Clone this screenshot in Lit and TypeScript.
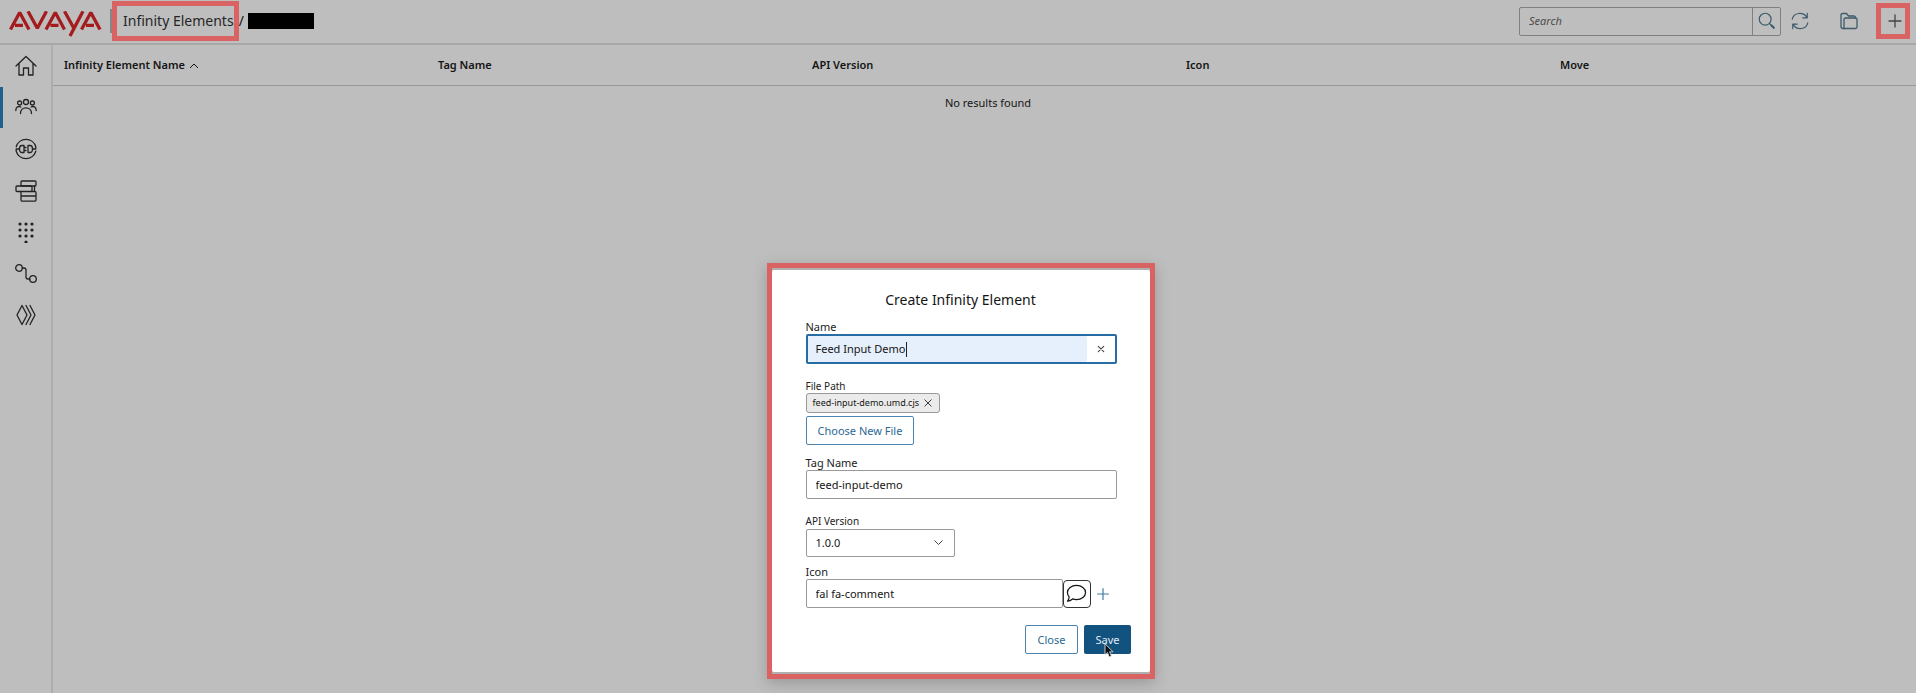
import { LitElement, html, css, svg } from "lit";
import { customElement, state } from "lit/decorators.js";
import { classMap } from "lit/directives/class-map.js";

const icons = {
  home: svg`<path d="M1 11 11 1.500 21 11M4 8.500V20h4.500v-7h5v7H18V8.500"/>`,
  users: svg`<circle cx="11" cy="6" r="2.500"/><circle cx="4.600" cy="7" r="2"/><circle cx="17.400" cy="7" r="2"/><path d="M5.500 17.500c0-7.500 11-7.500 11 0M.8 14.500c0-3.200 2.200-4.800 5-3.500M21.200 14.500c0-3.200-2.200-4.800-5-3.500"/>`,
  plug: svg`<path d="M1.200 8.800A10.200 10.200 0 0 1 20.800 8.800M20.800 13.200A10.200 10.200 0 0 1 1.200 13.200M1.200 13.200V11H4.500M20.800 8.800V11H17.500"/><path d="M9 7.500H7Q4.500 7.500 4.500 11T7 14.500h2zM9 9.500h2M9 12.500h2M13 7.500h2q2.500 0 2.500 3.500T15 14.500h-2z"/>`,
  stack: svg`<rect x="6" y="1" width="15" height="5" rx="1"/><rect x="1" y="6" width="16" height="5.500" rx="1"/><path d="M19.500 6v5.500M6 11.500V20q0 1.200 1.200 1.200h12.600q1.200 0 1.200-1.200v-7.300q0-1.200-1.200-1.200H16M6 16h15"/>`,
  keypad: svg`<g fill="currentColor" stroke="none">${[5, 11, 17].map((x) => [3, 9, 15].map((y) => svg`<circle cx=${x} cy=${y} r="1.600"/>`))}<circle cx="11" cy="21" r="1.600"/></g>`,
  route: svg`<circle cx="4" cy="5" r="3.300"/><circle cx="18" cy="16" r="3.300"/><path d="M7.300 5H9q2 0 2 2v7q0 2 2 2h1.700"/>`,
  layers: svg`<path d="M7 1.500 12 11 7 20.500 2 11zM11 1.500 16 11l-5 9.500M15 1.500 20 11l-5 9.500"/>`,
  search: svg`<circle cx="9" cy="9" r="6.500"/><path d="m14 14 2 2"/><path stroke-width="2.400" d="m16 16 2.500 2.500"/>`,
  refresh: svg`<path d="M2.500 9C4 1.500 14.500.5 18.500 7M19 2.500v5h-5M19.500 13C18 20.500 7.500 21.500 3.500 15M3 19.500v-5h5"/>`,
  folder: svg`<path d="M6.500 18.500H5Q3 18.500 3 16.500V5q0-1.500 1.500-1.500h4L10.500 6H16q1.500 0 1.500 2"/><path d="M6 18.500V9.500Q6 8 7.500 8h10Q19 8 19 9.500V17q0 1.500-1.500 1.500z"/>`,
  plus: svg`<path d="M11 5v12M5 11h12"/>`,
  close: svg`<path d="m6 6 10 10M16 6 6 16"/>`,
  clear: svg`<path stroke-width="2.400" d="m5 5 12 12M17 5 5 17"/>`,
  comment: svg`<path d="M11 2.500c5.300 0 9.500 3.400 9.500 7.500s-4.200 7.500-9.500 7.500c-1.500 0-2.900-.3-4.100-.8C5.500 18 3.600 19 1.500 19c1.200-1.100 1.700-2.800 1.800-4.400C2.200 13.300 1.500 11.700 1.500 10c0-4.100 4.200-7.500 9.500-7.500z"/>`,
};

const navItems: Array<[string, unknown]> = [
  ["Home", icons.home],
  ["Users", icons.users],
  ["Connections", icons.plug],
  ["Queues", icons.stack],
  ["Keypad", icons.keypad],
  ["Workflows", icons.route],
  ["Elements", icons.layers],
];

const icon = (shape: unknown, size = 22) =>
  html`<svg width=${size} height=${size} viewBox="0 0 22 22" fill="none" stroke="currentColor" stroke-width="1.3" stroke-linejoin="round" stroke-linecap="round" aria-hidden="true">${shape}</svg>`;

@customElement("app-root")
export class AppRoot extends LitElement {
  @state() private active = 1;

  static styles = css`
    :host {
      display: flex;
      flex-direction: column;
      min-height: 100vh;
      position: relative;
      overflow: hidden;
      background: #bebebe;
      color: #151515;
      font: 11px/16px "Noto Sans", sans-serif;
    }
    * { box-sizing: border-box; }
    svg { display: block; flex: none; }
    button, input, select { font: inherit; color: inherit; margin: 0; padding: 0; border: 0; background: none; border-radius: 2px; outline: 0; }
    button { display: flex; align-items: center; justify-content: center; cursor: pointer; }
    header { display: flex; align-items: center; height: 45px; padding: 0 6px 1px 9px; border-bottom: 2px solid #a8a8a8; }
    .logo { margin-top: 6px; }
    .divider { width: 2px; height: 24px; margin-left: 8px; background: #858585; }
    .crumb { display: flex; align-items: center; height: 40px; padding: 0 0 0 6px; border: 5px solid #d96363; font-size: 14px; line-height: 20px; color: #262626; text-decoration: none; }
    .slash { padding: 0 4px 0 0; font-size: 14px; }
    .redacted { width: 66px; height: 16px; background: #000; }
    .search { display: flex; width: 262px; height: 29px; margin-left: auto; border: 1px solid #808080; border-radius: 2px; }
    .search input { flex: 1; min-width: 0; padding: 0 9px; font-style: italic; }
    .search input::placeholder { color: #4b4b4b; opacity: 1; }
    .search button { width: 28px; border-left: 1px solid #808080; border-radius: 0; }
    .tools, .search button { color: #3d5b6b; }
    .tools { display: flex; align-items: center; }
    .tool { width: 38px; height: 30px; }
    .folder { margin: 0 8px 0 11px; }
    .add { width: 34px; height: 36px; padding-left: 3px; border: 5px solid #d96363; border-radius: 0; color: #444; }
    .body { display: flex; flex: 1; }
    nav { width: 53px; border-right: 2px solid #adadad; }
    .items { display: flex; flex-direction: column; height: 291px; }
    .item { flex: 1; display: flex; align-items: center; justify-content: center; border-left: 3px solid transparent; border-radius: 0; color: #222; padding-right: 3px; }
    .item.active { border-color: #1f628f; }
    main { flex: 1; min-width: 0; overflow: hidden; }
    table { width: calc(100% + 7px); table-layout: fixed; border-collapse: collapse; }
    th { height: 40px; padding: 0 11px; text-align: left; font-weight: 600; border-bottom: 1px solid #999; }
    th svg { display: inline-block; margin-left: 4px; }
    td { height: 35px; padding: 0; text-align: center; }
    .overlay { position: absolute; inset: 0; display: flex; justify-content: center; align-items: flex-end; padding: 0 0 14px 5px; pointer-events: none; }
    .frame { width: 388px; padding: 2px 0; border: 5px solid #d96363; background: #b0b0b0; box-shadow: 0 4px 14px rgba(0, 0, 0, 0.2); pointer-events: auto; }
    form { display: flex; flex-direction: column; align-items: flex-start; padding: 18px 19px 18px 34px; background: #fff; border-radius: 2px; }
    h2 { align-self: stretch; margin: 0 15px 8px 0; text-align: center; font-size: 14px; line-height: 24px; font-weight: 400; }
    label, .label { line-height: 14px; color: #222; }
    .small { font-size: 10px; }
    .control { display: flex; width: 311px; height: 29px; border: 1px solid #999; border-radius: 2px; }
    .control input { flex: 1; min-width: 0; padding: 0 9px; }
    .focused { position: relative; height: 30px; border: 2px solid #276ca3; margin-bottom: 15px; }
    .focused input { background: #e6effc; padding-left: 8px; caret-color: transparent; }
    .focused button { width: 28px; color: #444; }
    .caret { position: absolute; left: 98px; top: 6px; width: 1px; height: 15px; background: #222; }
    .chip { display: flex; align-items: center; height: 20px; margin-bottom: 3px; padding: 0 4px 0 6px; gap: 2px; font-size: 9px; background: #ebebeb; border: 1px solid #999; border-radius: 3px; }
    .outline { height: 29px; padding: 0 12px; border: 1px solid #4d83ad; color: #2b6893; background: #fff; }
    .choose { margin-bottom: 11px; padding: 0 11px; }
    .tag { margin-bottom: 15px; }
    .select { position: relative; width: 149px; height: 28px; margin: 1px 0 8px; }
    select { width: 100%; height: 100%; padding: 0 9px; border: 1px solid #999; appearance: none; }
    .select svg { position: absolute; right: 12px; top: 10px; pointer-events: none; }
    .row { display: flex; align-items: center; }
    .row .control { width: 257px; }
    .preview { width: 28px; height: 28px; border: 1px solid #333; border-radius: 4px; }
    .more { width: 24px; height: 28px; color: #3f7ba3; }
    .actions { display: flex; gap: 6px; align-self: flex-end; margin-top: 17px; }
    .save { position: relative; height: 29px; padding: 0 11px; background: #12527f; color: #e4edf4; }
    .pointer { position: absolute; left: 20px; top: 18px; }
  `;

  render() {
    return html`
      <header>
        <svg class="logo" width="93" height="27" viewBox="0 0 93 27" fill="none" stroke="#a51c1f" stroke-width="3.300" stroke-linejoin="bevel" role="img" aria-label="Avaya">
          <path d="M1.500 18.500 10.700 1.500 20 18.500M6 14.300h8M19 .3l9.300 17L37.500.3M37 18.500l9.300-17 9.200 17M41.500 14.300h8M55.500.3l9.500 17.200M74 .3 61 25M72.500 18.500l9.300-17 9.200 17M77 14.300h8"/>
        </svg>
        <div class="divider"></div>
        <a class="crumb" href="#elements">Infinity Elements</a>
        <span class="slash">/</span>
        <span class="redacted"></span>
        <div class="search">
          <input type="search" placeholder="Search" aria-label="Search" />
          <button aria-label="Search">${icon(icons.search, 20)}</button>
        </div>
        <div class="tools">
          <button class="tool" aria-label="Refresh">${icon(icons.refresh, 20)}</button>
          <button class="tool folder" aria-label="Folders">${icon(icons.folder)}</button>
          <button class="add" aria-label="Add">${icon(icons.plus)}</button>
        </div>
      </header>
      <div class="body">
        <nav>
          <div class="items">
            ${navItems.map(
              ([name, shape], i) => html`<button
                class=${classMap({ item: true, active: i === this.active })}
                aria-label=${name}
                @click=${() => (this.active = i)}
              >${icon(shape)}</button>`
            )}
          </div>
        </nav>
        <main>
          <table>
            <thead>
              <tr>
                <th>Infinity Element Name<svg width="10" height="6" viewBox="0 0 10 6" fill="none" stroke="currentColor"><path d="m1 5 4-4 4 4"/></svg></th>
                <th>Tag Name</th>
                <th>API Version</th>
                <th>Icon</th>
                <th>Move</th>
              </tr>
            </thead>
            <tbody><tr><td colspan="5">No results found</td></tr></tbody>
          </table>
        </main>
      </div>
      <div class="overlay">
        <div class="frame" role="dialog" aria-labelledby="title">
          <form @submit=${(e: Event) => e.preventDefault()}>
            <h2 id="title">Create Infinity Element</h2>
            <label for="name">Name</label>
            <div class="control focused">
              <input id="name" .value=${"Feed Input Demo"} />
              <span class="caret"></span>
              <button type="button" aria-label="Clear">${icon(icons.clear, 10)}</button>
            </div>
            <span class="label small">File Path</span>
            <div class="chip">feed-input-demo.umd.cjs<button type="button" aria-label="Remove file">${icon(icons.close, 14)}</button></div>
            <button type="button" class="outline choose">Choose New File</button>
            <label for="tag">Tag Name</label>
            <div class="control tag"><input id="tag" .value=${"feed-input-demo"} /></div>
            <label class="small" for="version">API Version</label>
            <div class="select">
              <select id="version"><option>1.0.0</option></select>
              <svg width="9" height="7" viewBox="0 0 9 7" fill="none" stroke="#444"><path d="m.5 1.500 4 4 4-4"/></svg>
            </div>
            <label for="icon">Icon</label>
            <div class="row">
              <div class="control"><input id="icon" .value=${"fal fa-comment"} /></div>
              <button type="button" class="preview" aria-label="Icon preview">${icon(icons.comment, 21)}</button>
              <button type="button" class="more" aria-label="Choose icon">${icon(icons.plus, 20)}</button>
            </div>
            <div class="actions">
              <button type="button" class="outline">Close</button>
              <button class="save">Save<svg class="pointer" width="10" height="15" viewBox="0 0 10 15" fill="#111" stroke="#eee" stroke-width=".8"><path d="M1 .8v11l2.500-2.300L5.200 14l2.200-.9-1.800-4.300H9z"/></svg></button>
            </div>
          </form>
        </div>
      </div>
    `;
  }
}
